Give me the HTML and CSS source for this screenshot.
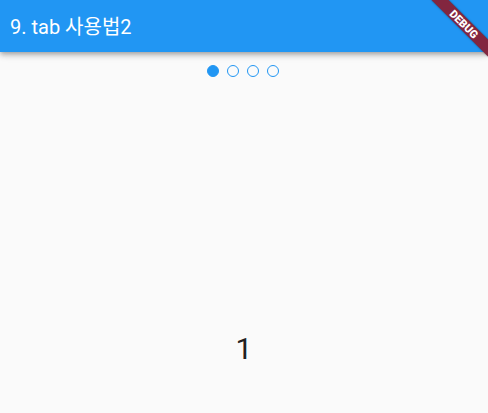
FILE: index.html
```html
<!DOCTYPE html>
<html lang="ko">
<head>
<meta charset="utf-8">
<title>9. tab 사용법2</title>
<link rel="stylesheet" href="styles.css">
</head>
<body>
<div class="app">
  <header class="appbar">
    <h1 class="title">9. tab 사용법2</h1>
  </header>
  <div class="indicator">
    <span class="dot active"></span>
    <span class="dot"></span>
    <span class="dot"></span>
    <span class="dot"></span>
  </div>
  <main class="page">
    <span class="page-number">1</span>
  </main>
  <div class="banner"><span class="banner-text">DEBUG</span></div>
</div>
</body>
</html>
```
FILE: styles.css
```css
html, body {
  margin: 0;
  padding: 0;
  height: 100%;
  background: #fafafa;
  overflow: hidden;
}
.app {
  position: relative;
  display: flex;
  flex-direction: column;
  height: 100%;
  font-family: Roboto, "Noto Sans CJK KR", sans-serif;
}
.appbar {
  height: 52px;
  background: #2196f3;
  display: flex;
  align-items: center;
  padding: 0 10px;
  box-shadow: 0 2px 4px -1px rgba(0,0,0,0.2), 0 4px 5px 0 rgba(0,0,0,0.14), 0 1px 10px 0 rgba(0,0,0,0.12);
  position: relative;
  z-index: 1;
}
.title {
  margin: 0;
  color: #fff;
  font-size: 20px;
  font-weight: 400;
  line-height: 1;
  padding-top: 1px;
}
.indicator {
  display: flex;
  justify-content: center;
  gap: 8px;
  padding-top: 13px;
  padding-right: 2px;
}
.dot {
  width: 12px;
  height: 12px;
  box-sizing: border-box;
  border-radius: 50%;
  border: 1.5px solid #2196f3;
}
.dot.active {
  background: #2196f3;
}
.page {
  flex: 1;
  display: flex;
  justify-content: center;
  align-items: flex-start;
  padding-top: 257px;
}
.page-number {
  font-size: 30px;
  color: #212121;
  line-height: 1;
}
.banner {
  position: absolute;
  z-index: 2;
  left: 424px;
  top: 18px;
  width: 80px;
  height: 12px;
  background: #82263f;
  box-shadow: 0 0 2px rgba(0,0,0,0.5);
  transform: rotate(45deg);
  display: flex;
  align-items: center;
  justify-content: center;
}
.banner-text {
  color: #fff;
  font-size: 11px;
  font-weight: 900;
  line-height: 1;
  letter-spacing: 0;
}
```
